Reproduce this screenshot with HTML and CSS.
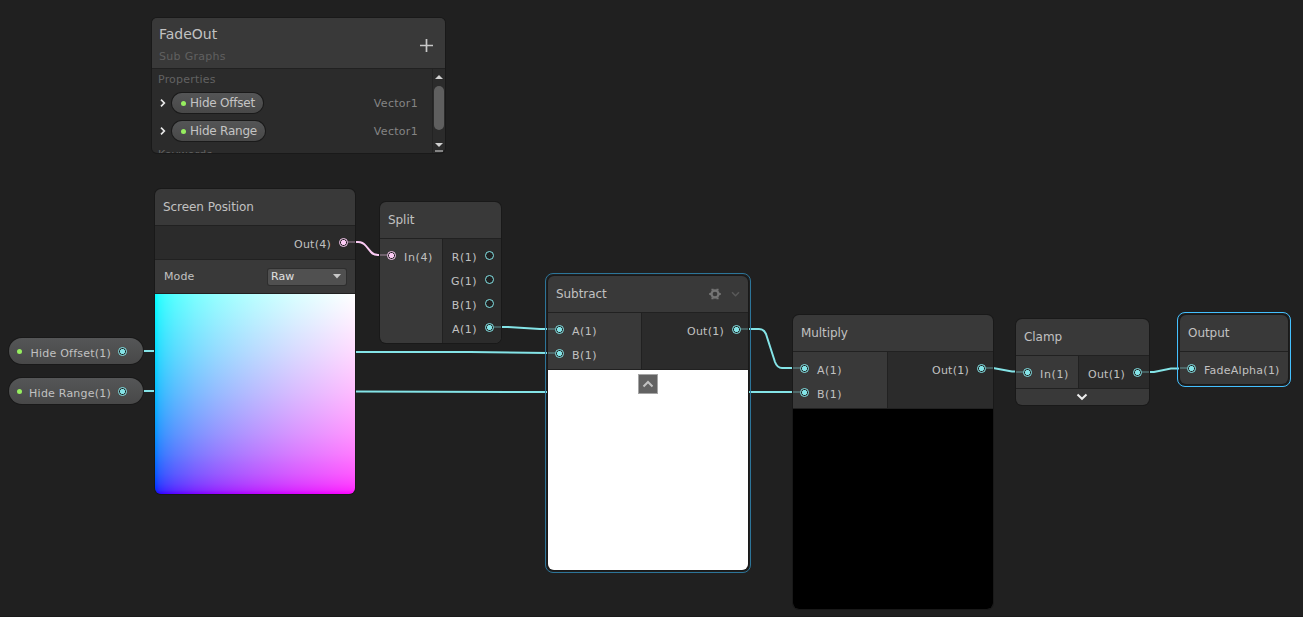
FILE: index.html
```html
<!DOCTYPE html>
<html lang="en">
<head>
<meta charset="utf-8">
<title>FadeOut</title>
<link rel="stylesheet" href="styles.css">
</head>
<body>
<main class="canvas">
  <svg class="wires" width="1303" height="617" viewBox="0 0 1303 617">
    <path class="wire pink" d="M355 242 H358 C362 242 364 243.500 366 246 L371 252 C373 254.500 375 255 378 255 H380"/>
    <path class="wire" d="M501 327 H508 L540 329 H548"/>
    <path class="wire" d="M143 351 H154 M354 352 L470 352 L548 353"/>
    <path class="wire" d="M143 391 H154 M354 391.500 L548 392 H793"/>
    <path class="wire" d="M748 329 H759 C763 329 764.500 330.500 766 334 L775 362 C776.500 366 778 368 782 368 H793"/>
    <path class="wire" d="M993 368 L1012 371.500 H1016"/>
    <path class="wire" d="M1149 372 H1154 L1171 368.500 H1180"/>
  </svg>

  <section class="blackboard">
    <header class="board-head">
      <div><h1>FadeOut</h1><p>Sub Graphs</p></div>
      <svg class="plus" width="13" height="13" viewBox="0 0 13 13"><path d="M6.500 0V13M0 6.500H13"/></svg>
    </header>
    <div class="board-body">
      <div class="board-list">
        <div class="category">Properties</div>
        <div class="field"><svg class="arrow" width="6" height="8" viewBox="0 0 6 8"><path d="M1 .7 4.300 4 1 7.300"/></svg><span class="pill"><i class="dot"></i>Hide Offset</span><span class="type">Vector1</span></div>
        <div class="field"><svg class="arrow" width="6" height="8" viewBox="0 0 6 8"><path d="M1 .7 4.300 4 1 7.300"/></svg><span class="pill"><i class="dot"></i>Hide Range</span><span class="type">Vector1</span></div>
        <div class="category next">Keywords</div>
      </div>
      <div class="scrollbar">
        <svg width="8" height="4" viewBox="0 0 8 4"><path d="M4 0 8 4H0Z"/></svg>
        <span class="thumb"></span>
        <svg width="8" height="9" viewBox="0 0 8 9"><path d="M0 0H8L4 4Z"/><path class="bar" d="M0 7H8V9H0Z"/></svg>
      </div>
    </div>
  </section>

  <section class="node screen-position">
    <header>Screen Position</header>
    <div class="ports"><div class="outs"><div class="port out pinkport on"><span class="label">Out(4)</span><i class="ring"></i></div></div></div>
    <div class="control"><span>Mode</span><span class="select">Raw<svg width="8" height="5" viewBox="0 0 8 5"><path d="M0 0H8L4 4.500Z"/></svg></span></div>
    <div class="preview uv"></div>
  </section>

  <section class="node split">
    <header>Split</header>
    <div class="ports">
      <div class="ins"><div class="port in pinkport on"><i class="ring"></i><span class="label loose">In(4)</span></div></div>
      <div class="outs">
        <div class="port out"><span class="label wide">R(1)</span><i class="ring"></i></div>
        <div class="port out"><span class="label wide">G(1)</span><i class="ring"></i></div>
        <div class="port out"><span class="label wide">B(1)</span><i class="ring"></i></div>
        <div class="port out on"><span class="label wide">A(1)</span><i class="ring"></i></div>
      </div>
    </div>
  </section>

  <section class="node subtract hovered">
    <header>Subtract
      <span class="tools">
        <svg width="12" height="12" viewBox="0 0 12 12"><circle class="gear" cx="6" cy="6" r="3.500"/><path class="teeth" d="M3.500 .8V2.500M8.500 .8V2.500M.2 6H2M10 6H11.800M3.500 9.500V11.200M8.500 9.500V11.200"/></svg>
        <svg width="9" height="6" viewBox="0 0 9 6"><path class="chev" d="M1 1.200 4.500 4.700 8 1.200"/></svg>
      </span>
    </header>
    <div class="ports">
      <div class="ins">
        <div class="port in on"><i class="ring"></i><span class="label wide">A(1)</span></div>
        <div class="port in on"><i class="ring"></i><span class="label wide">B(1)</span></div>
      </div>
      <div class="outs"><div class="port out on"><span class="label">Out(1)</span><i class="ring"></i></div></div>
    </div>
    <div class="preview white"><span class="collapse"><svg width="12" height="8" viewBox="0 0 12 8"><path d="M1.500 6.500 6 2 10.500 6.500"/></svg></span></div>
  </section>

  <section class="node multiply">
    <header>Multiply</header>
    <div class="ports">
      <div class="ins">
        <div class="port in on"><i class="ring"></i><span class="label wide">A(1)</span></div>
        <div class="port in on"><i class="ring"></i><span class="label wide">B(1)</span></div>
      </div>
      <div class="outs"><div class="port out on"><span class="label">Out(1)</span><i class="ring"></i></div></div>
    </div>
    <div class="preview black"></div>
  </section>

  <section class="node clamp">
    <header>Clamp</header>
    <div class="ports">
      <div class="ins"><div class="port in on"><i class="ring"></i><span class="label loose">In(1)</span></div></div>
      <div class="outs"><div class="port out on"><span class="label">Out(1)</span><i class="ring"></i></div></div>
    </div>
    <div class="expand"><svg width="12" height="8" viewBox="0 0 12 8"><path d="M1.500 1.500 6 5.800 10.500 1.500"/></svg></div>
  </section>

  <section class="node output selected">
    <header>Output</header>
    <div class="ports"><div class="ins"><div class="port in on"><i class="ring"></i><span class="label">FadeAlpha(1)</span></div></div></div>
  </section>

  <div class="token hide-offset"><i class="dot"></i><span class="label">Hide Offset(1)</span><i class="ring"></i></div>
  <div class="token hide-range"><i class="dot"></i><span class="label">Hide Range(1)</span><i class="ring"></i></div>
</main>
</body>
</html>
```
FILE: styles.css
```css
* { box-sizing: border-box; }
body { margin: 0; background: #202020; font-family: "DejaVu Sans", sans-serif; color: #c1c1c1; }
.canvas { position: relative; width: 1303px; height: 617px; overflow: hidden; border-bottom: 1px solid #191919; background: #202020; }
.wires { position: absolute; left: 0; top: 0; }
.wire { fill: none; stroke: #84e4e7; stroke-width: 2; }
.wire.pink { stroke: #fbcbf4; }
h1, p { margin: 0; font-weight: normal; }

.blackboard { position: absolute; left: 152px; top: 18px; width: 293px; height: 135px; border-radius: 5px; background: #2b2b2b; box-shadow: 0 0 0 1px #191919; overflow: hidden; }
.board-head { display: flex; justify-content: space-between; height: 51px; padding: 7px 12px 0 7px; background: #393939; border-bottom: 1px solid #212121; }
.board-head h1 { font-size: 14px; line-height: 18px; letter-spacing: 0; }
.board-head p { margin-top: 6px; font-size: 11px; line-height: 16px; color: #606060; letter-spacing: .3px; }
.plus { margin-top: 14px; fill: none; stroke: #c8c8c8; stroke-width: 1.7; }
.board-body { display: flex; height: 84px; }
.board-list { width: 281px; border-right: 1px solid #232323; overflow: hidden; }
.category { height: 20px; padding: 1px 0 0 6px; font-size: 11px; line-height: 20px; color: #626262; letter-spacing: .2px; }
.category.next { padding-top: 0; }
.field { display: flex; align-items: center; height: 28px; padding: 0 14px 0 8px; }
.arrow { fill: none; stroke: #e6e6e6; stroke-width: 1.7; }
.pill { display: flex; align-items: center; height: 20px; margin-left: 6px; padding: 0 8px 0 9px; border-radius: 10px; background: linear-gradient(#545556, #484848); box-shadow: 0 0 0 1px #1a1a1a; font-size: 12px; letter-spacing: -.22px; color: #c4c4c4; }
.dot { width: 5px; height: 5px; border-radius: 50%; background: #96ee5f; }
.pill .dot { margin-right: 4px; }
.type { margin-left: auto; font-size: 11px; color: #858585; letter-spacing: .3px; }
.scrollbar { display: flex; flex-direction: column; align-items: center; width: 12px; padding-top: 6px; }
.scrollbar svg { fill: #d0d0d0; }
.scrollbar .bar { fill: #858585; }
.thumb { width: 10px; height: 44px; margin: 7px 0 13px; border-radius: 5px; background: #5f5f5f; }

.node { position: absolute; border-radius: 6px; background: #393939; box-shadow: 0 0 0 1px #191919; }
.node header { display: flex; align-items: center; height: 37px; padding: 0 8px; border-bottom: 1px solid #212121; font-size: 12px; letter-spacing: -.06px; color: #c1c1c1; }
.ports { display: flex; }
.ins, .outs { padding: 4px 0; }
.outs { flex: 1; background: #2b2b2b; }
.ins + .outs { border-left: 1px solid #212121; }
.port { position: relative; display: flex; align-items: center; height: 24px; padding: 0 7px; --wire: #84e4e7; }
.pinkport { --wire: #fbcbf4; }
.port.out { justify-content: flex-end; }
.label { padding-top: 6px; font-size: 11px; line-height: 14px; letter-spacing: .25px; white-space: nowrap; }
.label.wide { letter-spacing: .5px; }
.label.loose { letter-spacing: .65px; }
.in .label { margin-left: 8px; }
.out .label { margin-right: 8px; }
.ring { flex: none; width: 9px; height: 9px; border: 1.500px solid var(--wire, #84e4e7); border-radius: 50%; background: #202020; }
.on .ring, .token .ring { background: radial-gradient(circle, var(--wire, #84e4e7) 2.200px, #202020 2.900px); }
.on::after { content: ""; position: absolute; top: 11px; width: 7px; height: 2px; background: var(--wire); opacity: .28; }
.in.on::after { left: 0; }
.out.on::after { right: 0; }

.screen-position { left: 155px; top: 189px; width: 200px; }
.screen-position .ports { border-bottom: 1px solid #212121; height: 34px; }
.control { display: flex; justify-content: space-between; align-items: center; height: 34px; padding: 0 9px; border-bottom: 1px solid #212121; font-size: 11px; letter-spacing: .1px; }
.select { display: flex; align-items: center; justify-content: space-between; width: 78px; height: 16px; padding: 0 5px 0 3px; border-radius: 2px; background: #505050; box-shadow: 0 0 0 1px #2e2e2e; color: #e0e0e0; }
.select svg { fill: #c8c8c8; }
.preview { height: 200px; border-radius: 0 0 6px 6px; }
.uv {
  background:
    linear-gradient(to right, #0000ff, #2b00ff 2%, #4200ff 5%, #5a00ff 10%, #7b00ff 20%, #9400ff 30%, #a800ff 40%, #ba00ff 50%, #ca00ff 60%, #d900ff 70%, #e600ff 80%, #f300ff 90%, #ff00ff),
    linear-gradient(to top, #0000ff, #002bff 2%, #0042ff 5%, #005aff 10%, #007bff 20%, #0094ff 30%, #00a8ff 40%, #00baff 50%, #00caff 60%, #00d9ff 70%, #00e6ff 80%, #00f3ff 90%, #00ffff);
  background-blend-mode: screen;
}
.split { left: 380px; top: 202px; width: 121px; height: 141px; }
.split .ins { width: 62px; }
.split .outs { border-radius: 0 0 6px 0; }
.subtract { left: 548px; top: 276px; width: 200px; }
.subtract .ins { width: 93px; }
.subtract .ports, .multiply .ports { height: 57px; border-bottom: 1px solid #212121; }
.tools { display: flex; align-items: center; gap: 10px; margin-left: auto; }
.tools svg { fill: none; }
.gear { stroke: #747474; stroke-width: 2.300; }
.teeth { stroke: #747474; stroke-width: 2.200; }
.chev { stroke: #595959; stroke-width: 1.500; }
.white { display: flex; justify-content: center; align-items: flex-start; padding-top: 4px; background: #fff; }
.collapse { display: flex; align-items: center; justify-content: center; width: 20px; height: 20px; border: 1px solid #a5a5a5; background: #626262; }
.collapse svg { fill: none; stroke: #c2c2c2; stroke-width: 2; }
.multiply { left: 793px; top: 315px; width: 200px; }
.multiply .ins { width: 94px; }
.black { background: #000; }
.clamp { left: 1016px; top: 319px; width: 133px; }
.clamp .ins { width: 62px; }
.clamp .ports { height: 32px; }
.expand { display: flex; justify-content: center; align-items: center; height: 17px; padding-right: 1px; border-top: 1px solid #212121; }
.expand svg { fill: none; stroke: #eee; stroke-width: 2; }
.output { left: 1180px; top: 315px; width: 108px; height: 69px; }
.hovered::before, .selected::before { content: ""; position: absolute; inset: -3px; border: 1px solid #2d7599; border-radius: 8px; pointer-events: none; }
.selected::before { border-color: #44c0ff; }

.token { position: absolute; left: 9px; display: flex; align-items: center; width: 134px; height: 26px; padding: 0 16px 0 8px; border-radius: 13px; background: linear-gradient(#555657, #484848); box-shadow: 0 0 0 1px #191919; }
.token .label { margin: 0 7px 0 auto; padding-top: 5px; letter-spacing: .22px; }
.hide-offset { top: 338px; }
.hide-range { top: 378px; }
```
